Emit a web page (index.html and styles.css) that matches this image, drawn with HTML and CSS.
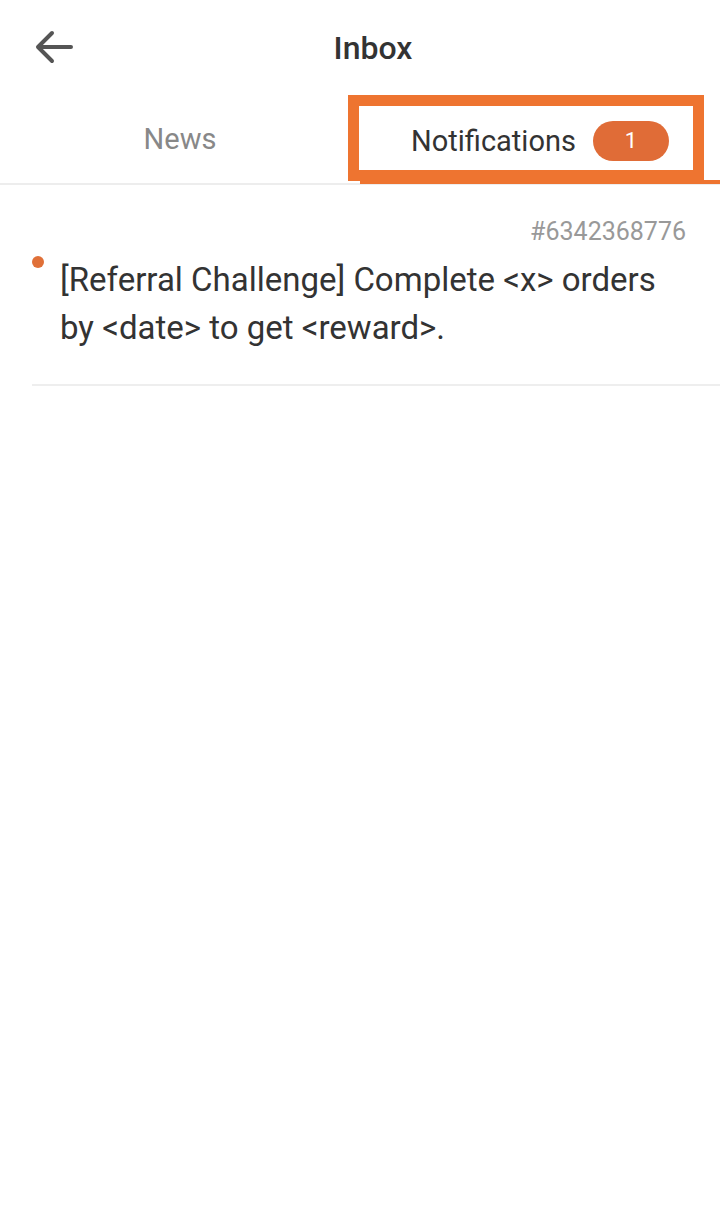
FILE: index.html
```html
<!DOCTYPE html>
<html lang="en">
<head>
    <meta charset="UTF-8">
    <meta name="viewport" content="width=device-width, initial-scale=1.0">
    <title>Inbox</title>
    <link rel="stylesheet" href="styles.css">
</head>
<body>
    <header class="topbar">
        <button class="back" aria-label="Back">
            <svg viewBox="0 0 40 36" width="40" height="36">
                <path d="M37 18 H5 M18 4 L4 18 L18 32" fill="none" stroke="#555" stroke-width="4" stroke-linecap="round" stroke-linejoin="round"/>
            </svg>
        </button>
        <h1 class="title">Inbox</h1>
    </header>

    <nav class="tabs">
        <div class="tab">News</div>
        <div class="tab active">
            <span>Notifications</span>
            <span class="badge">1</span>
        </div>
        <div class="highlight"></div>
    </nav>

    <ul class="list">
        <li class="item">
            <div class="item-id">#6342368776</div>
            <div class="item-body">
                <span class="dot"></span>
                <p class="item-text">[Referral Challenge] Complete &lt;x&gt; orders by &lt;date&gt; to get &lt;reward&gt;.</p>
            </div>
        </li>
    </ul>
</body>
</html>
```

FILE: styles.css
```css
body {
    margin: 0;
    width: 720px;
    height: 1232px;
    background: #fff;
    font-family: Roboto, "Noto Sans", sans-serif;
    color: #333;
    overflow: hidden;
}
.topbar {
    height: 95px;
    display: flex;
    align-items: center;
    justify-content: center;
    padding-left: 26px;
    position: relative;
}
.back {
    position: absolute;
    left: 34px;
    top: 29px;
    padding: 0;
    border: 0;
    background: none;
    display: flex;
}
.title {
    margin: 0;
    font-size: 32px;
    font-weight: 500;
    color: #333;
}
.tabs {
    display: grid;
    grid-template-columns: 1fr 1fr;
    height: 88px;
    border-bottom: 2px solid #ededed;
    position: relative;
}
.tab {
    display: flex;
    align-items: center;
    justify-content: center;
    gap: 17px;
    font-size: 29px;
    color: #888;
}
.tab.active {
    color: #333;
    box-shadow: inset 0 -4px 0 #ee7430;
    margin-bottom: -1px;
    padding-top: 2px;
}
.badge {
    width: 76px;
    height: 40px;
    border-radius: 20px;
    background: #e06c37;
    color: #fff;
    font-size: 22px;
    display: flex;
    align-items: center;
    justify-content: center;
}
.highlight {
    position: absolute;
    left: 348px;
    top: 0;
    width: 334px;
    height: 64px;
    border: 11px solid #ee7430;
}
.list {
    list-style: none;
    margin: 0;
    padding: 0 0 0 32px;
}
.item {
    border-bottom: 2px solid #eeeeee;
    padding: 33px 34px 32px 0;
}
.item-id {
    text-align: right;
    font-size: 25px;
    color: #999;
    line-height: 28px;
}
.item-body {
    display: flex;
    gap: 16px;
    margin-top: 10px;
}
.dot {
    flex: none;
    width: 12px;
    height: 12px;
    border-radius: 50%;
    background: #e07038;
    margin-top: 0;
}
.item-text {
    margin: 0;
    font-size: 33px;
    line-height: 48px;
    color: #333;
}
```
